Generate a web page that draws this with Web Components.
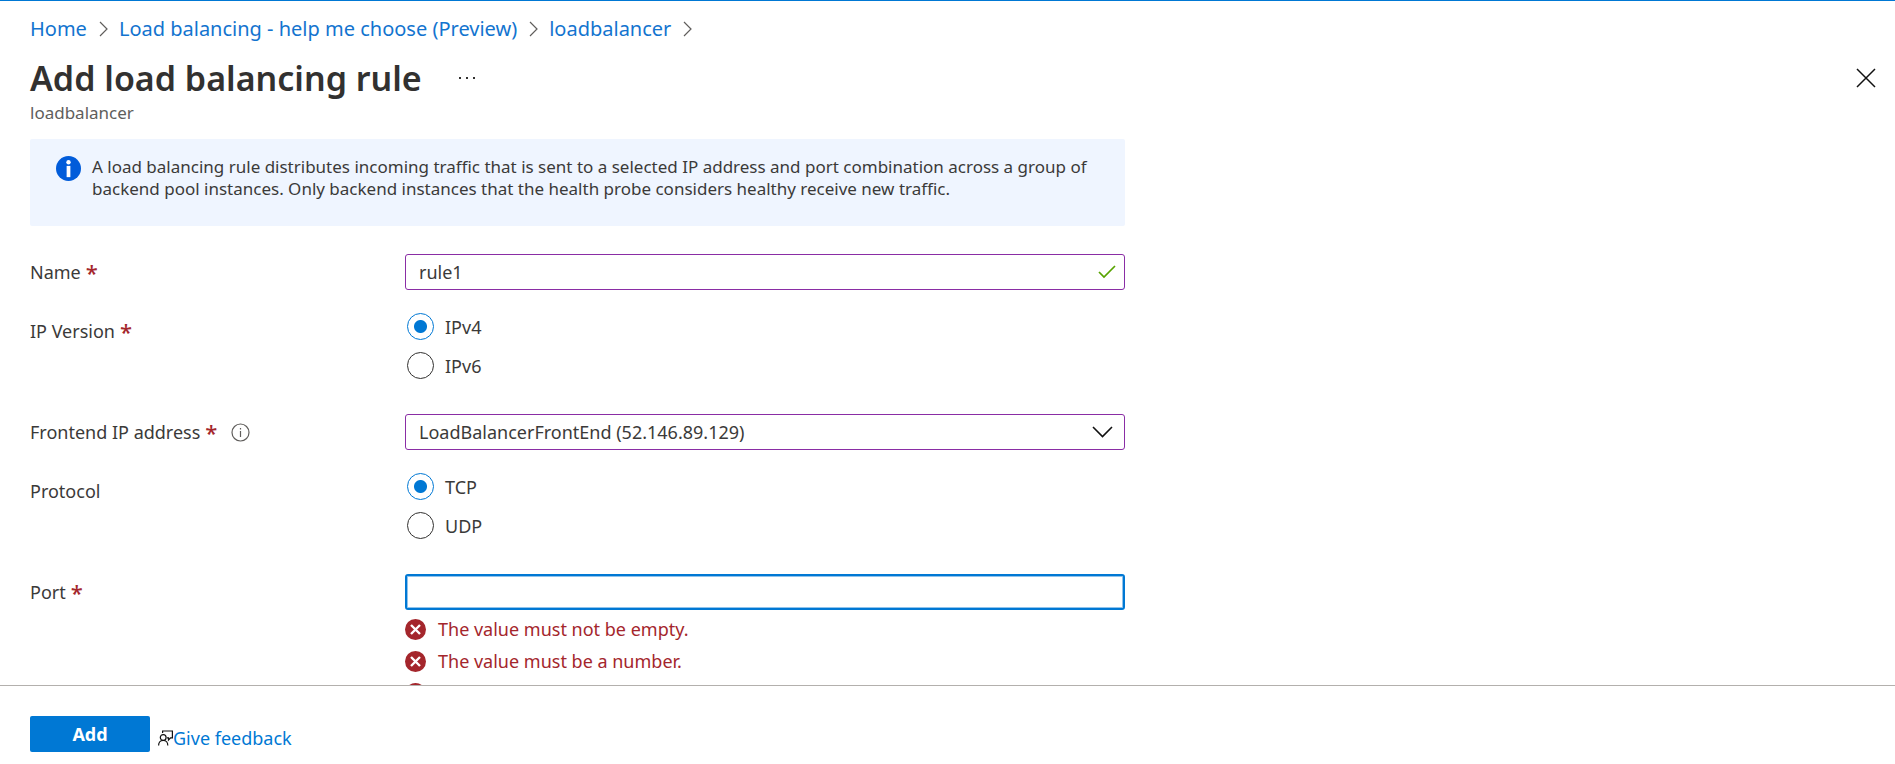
<!DOCTYPE html>
<html lang="en">
<head>
<meta charset="utf-8">
<title>Add load balancing rule</title>
<style>
  html, body { height: 100%; margin: 0; }
  body { background: #fff; font-family: "Noto Sans", "Open Sans", sans-serif; color: #3b3a39; }
</style>
</head>
<body>
<rule-blade>
  <bread-crumb slot="top">
    <crumb-link>Home</crumb-link>
    <crumb-link>Load balancing - help me choose (Preview)</crumb-link>
    <crumb-link>loadbalancer</crumb-link>
  </bread-crumb>
  <blade-title slot="top" subtitle="loadbalancer">Add load balancing rule</blade-title>

  <info-box>A load balancing rule distributes incoming traffic that is sent to a selected IP address and port combination across a group of backend pool instances. Only backend instances that the health probe considers healthy receive new traffic.</info-box>
  <text-field label="Name" required value="rule1" state="valid"></text-field>
  <radio-field label="IP Version" required options="IPv4,IPv6"></radio-field>
  <select-field label="Frontend IP address" required hint="Frontend IP address help" options="LoadBalancerFrontEnd (52.146.89.129)"></select-field>
  <radio-field label="Protocol" options="TCP,UDP"></radio-field>
  <text-field label="Port" required value="" state="active">
    <field-error>The value must not be empty.</field-error>
    <field-error>The value must be a number.</field-error>
    <field-error></field-error>
  </text-field>

  <primary-button slot="bottom">Add</primary-button>
  <feedback-link slot="bottom">Give feedback</feedback-link>
</rule-blade>

<script>
const base = ':host, *, *::before, *::after { box-sizing: border-box; }';

function define(name, render) {
  customElements.define(name, class extends HTMLElement {
    constructor() {
      super();
      this.attachShadow({ mode: 'open' });
    }
    connectedCallback() {
      const t = document.createElement('template');
      t.innerHTML = render(this);
      this.shadowRoot.replaceChildren(t.content.cloneNode(true));
    }
  });
}

define('rule-blade', () => `
  <style>
    ${base}
    :host { display: flex; flex-direction: column; height: 100vh; border-top: 1px solid #0078d4; }
    header { padding: 12px 18px 0 30px; }
    main { flex: 1; min-height: 0; overflow: hidden; padding: 15px 30px 0; }
    .form { display: flex; flex-direction: column; gap: 23px; max-width: 1095px; }
    footer { display: flex; align-items: flex-start; gap: 8px; border-top: 1px solid #b3b0ad; padding: 30px 30px 12px; }
  </style>
  <header><slot name="top"></slot></header>
  <main><div class="form"><slot></slot></div></main>
  <footer><slot name="bottom"></slot></footer>`);

define('bread-crumb', () => `
  <style>
    :host { display: block; }
    nav { display: flex; gap: 11px; }
  </style>
  <nav aria-label="Breadcrumb"><slot></slot></nav>`);

define('crumb-link', () => `
  <style>
    :host { display: flex; align-items: center; gap: 12px; font-size: 20px; line-height: 32px; }
    a { color: #1374cf; text-decoration: none; }
    svg { display: block; flex: none; }
  </style>
  <a href="#"><slot></slot></a>
  <svg width="9" height="16" viewBox="0 0 9 16" fill="none" stroke="#605e5c" stroke-width="1.2" aria-hidden="true"><path d="M1 1l7 7-7 7"/></svg>`);

define('blade-title', el => `
  <style>
    ${base}
    :host { display: block; padding-top: 9px; }
    .row { display: flex; align-items: center; height: 48px; }
    h1 { margin: 0; font-size: 34px; line-height: 48px; font-weight: 600; color: #323130; }
    button { display: flex; padding: 0; border: 0; background: none; }
    .more { margin-left: 36px; }
    .close { margin-left: auto; }
    p { margin: 0; font-size: 17px; line-height: 22px; color: #605e5c; }
  </style>
  <div class="row">
    <h1><slot></slot></h1>
    <button class="more" type="button" aria-label="More"><svg width="18" height="4" viewBox="0 0 18 4" fill="#323130"><path d="M1 1h2v2H1zM8 1h2v2H8zM15 1h2v2h-2z"/></svg></button>
    <button class="close" type="button" aria-label="Close"><svg width="22" height="20" viewBox="0 0 22 20" fill="none" stroke="#111" stroke-width="1.5"><path d="M2 1l18 18M20 1L2 19"/></svg></button>
  </div>
  <p>${el.getAttribute('subtitle')}</p>`);

define('info-box', () => `
  <style>
    ${base}
    :host { display: flex; gap: 11px; min-height: 87px; padding: 17px 26px; margin-bottom: 5px; border-radius: 2px; background: #eff5ff; }
    svg { flex: none; }
    p { margin: 0; font-size: 17px; line-height: 22px; }
  </style>
  <svg width="25" height="25" viewBox="0 0 24 24" aria-hidden="true"><circle cx="12" cy="12" r="12" fill="#015cda"/><circle cx="12" cy="6" r="2.1" fill="#fff"/><path d="M10.2 9.5h3.6v10.8h-3.6z" fill="#fff"/></svg>
  <p><slot></slot></p>`);

const rowStyle = `
  ${base}
  :host { display: grid; grid-template-columns: 375px minmax(0, 1fr); }
  .label { display: flex; align-items: center; height: 36px; font-size: 18px; line-height: 24px; }
  .star { margin-left: 5px; font-size: 22px; font-weight: 500; color: #a4262c; }
  svg { display: block; }
`;
const star = el => el.hasAttribute('required') ? '<span class="star" aria-hidden="true">*</span>' : '';

define('text-field', el => {
  const state = el.getAttribute('state');
  return `
  <style>
    ${rowStyle}
    .box { display: grid; align-items: center; }
    .box > * { grid-area: 1 / 1; }
    input { width: 100%; height: 36px; padding: 0 40px 0 13px; border: 1px solid #8a2da5; border-radius: 3px; background: #fff; color: inherit; font: 18px/24px "Noto Sans", sans-serif; outline: 0; }
    .active input { border: 2px solid #0078d4; box-shadow: inset 0 0 0 1px #8fc3ec; }
    .box svg { justify-self: end; margin-right: 9px; }
    .errors { display: flex; flex-direction: column; gap: 8px; padding-top: 7px; }
    .valid .errors { display: none; }
  </style>
  <label class="label" for="field">${el.getAttribute('label')}${star(el)}</label>
  <div class="${state}">
    <div class="box">
      <input id="field" type="text" value="${el.getAttribute('value')}">
      ${state === 'valid' ? '<svg width="18" height="14" viewBox="0 0 18 14" fill="none" stroke="#57a300" stroke-width="1.7" aria-hidden="true"><path d="M1 7l5 5L17 1"/></svg>' : ''}
    </div>
    <div class="errors"><slot></slot></div>
  </div>`;
});

define('field-error', () => `
  <style>
    :host { display: flex; align-items: center; gap: 12px; height: 24px; font-size: 18px; line-height: 24px; color: #a4262c; }
    svg { flex: none; }
  </style>
  <svg width="21" height="21" viewBox="0 0 21 21" aria-hidden="true"><circle cx="10.5" cy="10.5" r="10.5" fill="#a4262c"/><path d="M6 6l9 9M15 6l-9 9" stroke="#fff" stroke-width="2.4"/></svg>
  <span><slot></slot></span>`);

define('radio-field', el => `
  <style>
    ${rowStyle}
    .group { display: flex; flex-direction: column; gap: 12px; padding: 0 2px 12px; }
    .group label { display: flex; align-items: center; gap: 11px; height: 27px; font-size: 18px; line-height: 24px; }
    input { appearance: none; flex: none; width: 27px; height: 27px; margin: 0; border: 1px solid #323130; border-radius: 50%; background: #fff; }
    input:checked { border-color: #0078d4; background: radial-gradient(circle, #0078d4 6px, #fff 7px); }
  </style>
  <span class="label" id="caption">${el.getAttribute('label')}${star(el)}</span>
  <div class="group" role="radiogroup" aria-labelledby="caption">
    ${el.getAttribute('options').split(',').map((o, i) => `<label><input type="radio" name="choice" value="${o}"${i ? '' : ' checked'}>${o}</label>`).join('')}
  </div>`);

define('select-field', el => `
  <style>
    ${rowStyle}
    .hint { display: flex; margin-left: 14px; }
    .box { display: grid; align-items: center; }
    .box > * { grid-area: 1 / 1; }
    select { appearance: none; width: 100%; height: 36px; padding: 0 40px 0 13px; border: 1px solid #8a2da5; border-radius: 3px; background: #fff; color: inherit; font: 18px/24px "Noto Sans", sans-serif; }
    .box svg { justify-self: end; margin-right: 12px; pointer-events: none; }
  </style>
  <div class="label"><label for="field">${el.getAttribute('label')}</label>${star(el)}
    <span class="hint" role="img" aria-label="${el.getAttribute('hint')}"><svg width="19" height="19" viewBox="0 0 19 19" fill="none" stroke="#605e5c" stroke-width="1.2"><circle cx="9.5" cy="9.5" r="8.5"/><path d="M9.5 8v6M9.5 5v1.6"/></svg></span>
  </div>
  <div class="box">
    <select id="field">${el.getAttribute('options').split(',').map(o => `<option>${o}</option>`).join('')}</select>
    <svg width="21" height="12" viewBox="0 0 21 12" fill="none" stroke="#111" stroke-width="1.6" aria-hidden="true"><path d="M1 1l9.5 9.5L20 1"/></svg>
  </div>`);

define('primary-button', () => `
  <style>
    :host { display: block; }
    button { display: block; width: 120px; height: 36px; padding: 0; border: 0; border-radius: 2px; background: #0078d4; color: #fff; font: 700 18px/24px "Noto Sans", sans-serif; }
  </style>
  <button type="button"><slot></slot></button>`);

define('feedback-link', () => `
  <style>
    :host { display: block; padding-top: 10px; }
    a { display: flex; align-items: center; font-size: 18px; line-height: 24px; color: #0078d4; text-decoration: none; }
    svg { flex: none; }
  </style>
  <a href="#"><svg width="15" height="16" viewBox="0 0 15 16" fill="none" stroke="#111" stroke-width="1.2" aria-hidden="true"><circle cx="5.2" cy="7.5" r="2.9"/><path d="M.6 15.5c0-3 2-5 4.600-5s4.600 2 4.600 5M4.600 3V1h9.800v6.800h-1.800L10.500 10V7.800H9"/></svg><slot></slot></a>`);
</script>
</body>
</html>
